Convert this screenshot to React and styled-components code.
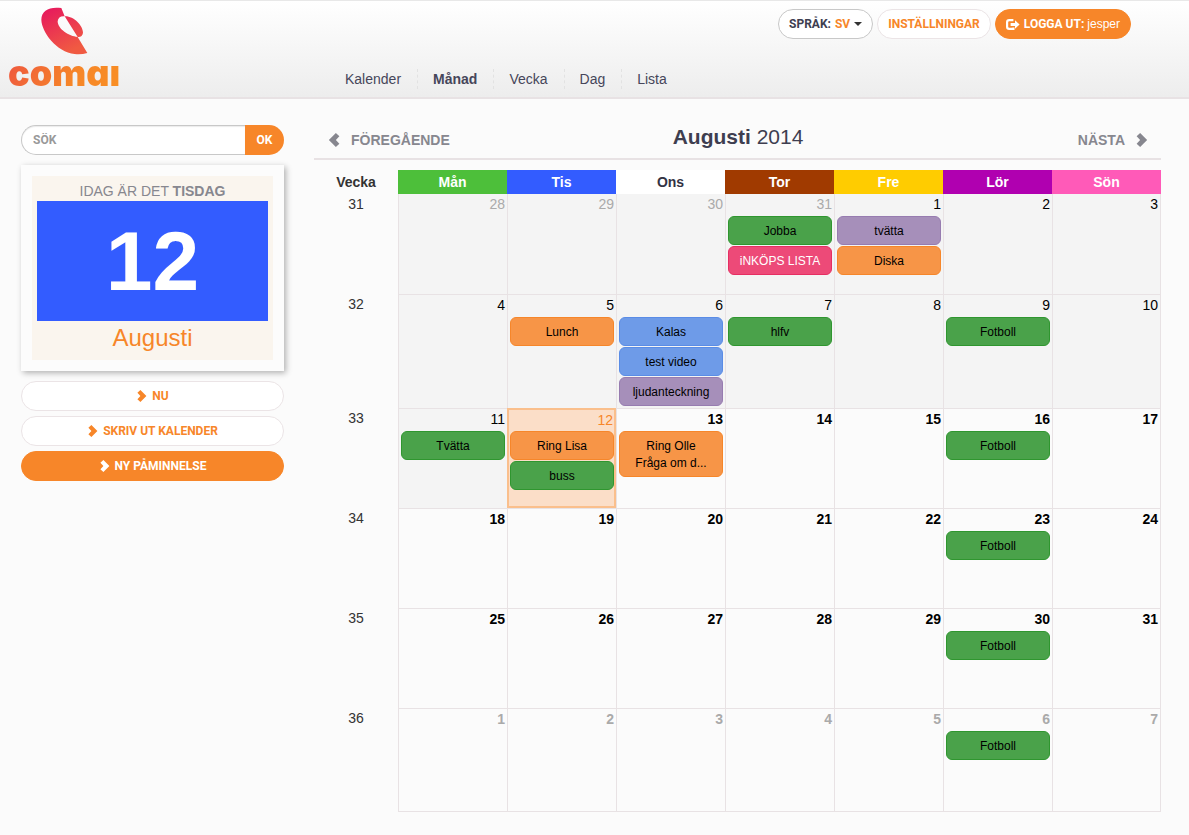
import React, { useState } from "react";
import styled, { createGlobalStyle } from "styled-components";

const weekdays = [
    { name: "Mån", color: "#4dbf3a" },
    { name: "Tis", color: "#335cff" },
    { name: "Ons", color: "#ffffff", text: "#333344" },
    { name: "Tor", color: "#a03a00" },
    { name: "Fre", color: "#ffcc00" },
    { name: "Lör", color: "#b000b0" },
    { name: "Sön", color: "#ff5ab8" },
];

const tones = {
    green: { fill: "#4aa24a", line: "#2f962f" },
    pink: { fill: "#ed4a78", line: "#e62e62" },
    purple: { fill: "#a68fba", line: "#977cb0" },
    orange: { fill: "#f79547", line: "#f6862a" },
    blue: { fill: "#6e9be8", line: "#5a8ce6" },
};

const fotboll = { tone: "green", lines: ["Fotboll"] };

const weeks = [
    {
        week: 31,
        days: [
            { date: 28, kind: "past", out: true },
            { date: 29, kind: "past", out: true },
            { date: 30, kind: "past", out: true },
            {
                date: 31,
                kind: "past",
                out: true,
                events: [
                    { tone: "green", lines: ["Jobba"] },
                    { tone: "pink", lines: ["iNKÖPS LISTA"] },
                ],
            },
            {
                date: 1,
                kind: "past",
                events: [
                    { tone: "purple", lines: ["tvätta"] },
                    { tone: "orange", lines: ["Diska"] },
                ],
            },
            { date: 2, kind: "past" },
            { date: 3, kind: "past" },
        ],
    },
    {
        week: 32,
        days: [
            { date: 4, kind: "past" },
            { date: 5, kind: "past", events: [{ tone: "orange", lines: ["Lunch"] }] },
            {
                date: 6,
                kind: "past",
                events: [
                    { tone: "blue", lines: ["Kalas"] },
                    { tone: "blue", lines: ["test video"] },
                    { tone: "purple", lines: ["ljudanteckning"] },
                ],
            },
            { date: 7, kind: "past", events: [{ tone: "green", lines: ["hlfv"] }] },
            { date: 8, kind: "past" },
            { date: 9, kind: "past", events: [fotboll] },
            { date: 10, kind: "past" },
        ],
    },
    {
        week: 33,
        days: [
            { date: 11, kind: "past", events: [{ tone: "green", lines: ["Tvätta"] }] },
            {
                date: 12,
                kind: "today",
                events: [
                    { tone: "orange", lines: ["Ring Lisa"] },
                    { tone: "green", lines: ["buss"] },
                ],
            },
            { date: 13, events: [{ tone: "orange", lines: ["Ring Olle", "Fråga om d..."] }] },
            { date: 14 },
            { date: 15 },
            { date: 16, events: [fotboll] },
            { date: 17 },
        ],
    },
    {
        week: 34,
        days: [18, 19, 20, 21, 22, 23, 24].map((date) => ({
            date,
            events: date === 23 ? [fotboll] : [],
        })),
    },
    {
        week: 35,
        days: [25, 26, 27, 28, 29, 30, 31].map((date) => ({
            date,
            events: date === 30 ? [fotboll] : [],
        })),
    },
    {
        week: 36,
        days: [1, 2, 3, 4, 5, 6, 7].map((date) => ({
            date,
            out: true,
            events: date === 6 ? [fotboll] : [],
        })),
    },
];

const Chevron = ({ left, size = 12 }) => (
    <svg width={size} height={size} viewBox="0 0 12 12" aria-hidden="true">
        <path
            d={
                left
                    ? "M7.6 0 L10.6 2.8 L7.6 6 L10.6 9.2 L7.6 12 L1.6 6 Z"
                    : "M4.4 0 L1.4 2.8 L4.4 6 L1.4 9.2 L4.4 12 L10.4 6 Z"
            }
            fill="currentColor"
        />
    </svg>
);

const LogoutIcon = () => (
    <svg width="14" height="11" viewBox="0 0 14 11" aria-hidden="true">
        <path
            d="M7.4 1.1 H3.2 Q1.1 1.1 1.1 3.2 V7.8 Q1.1 9.9 3.2 9.9 H7.4 V8.4"
            fill="none"
            stroke="currentColor"
            strokeWidth="2.2"
        />
        <path d="M4.6 4 H9 V1.2 L13.6 5.5 L9 9.8 V7 H4.6 Z" fill="currentColor" />
    </svg>
);

const LogoMark = () => (
    <svg width="48" height="48" viewBox="124 20 144 144" aria-hidden="true">
        <defs>
            <linearGradient id="mark" x1="0" y1="0" x2="0.5" y2="1">
                <stop offset="0" stopColor="#e6155f" />
                <stop offset="1" stopColor="#f05a42" />
            </linearGradient>
        </defs>
        <path
            d="M185 23 C150 18 125 30 125 58 C126 95 170 155 225 161 Q245 163 263 158 L234 110 C208 108 174 86 174 63 C175 52 184 46 195 48 Z M195 48 C220 46 250 75 250 97 C249 106 243 111 234 110 Z"
            fill="url(#mark)"
        />
    </svg>
);

export default function App() {
    const [query, setQuery] = useState("");

    return (
        <>
            <GlobalStyle />
            <Header>
                <Brand href="#start" aria-label="comai">
                    <LogoMark />
                    <Wordmark>comaı</Wordmark>
                </Brand>
                <HeaderBody>
                    <Tools>
                        <PillButton $tone="dark">
                            SPRÅK: <em>SV</em>
                            <Caret />
                        </PillButton>
                        <PillButton>INSTÄLLNINGAR</PillButton>
                        <PillButton $tone="solid">
                            <LogoutIcon />
                            <span>
                                LOGGA UT: <Username>jesper</Username>
                            </span>
                        </PillButton>
                    </Tools>
                    <Nav>
                        <NavLink href="#kalender">Kalender</NavLink>
                        <NavLink href="#manad" $active>
                            Månad
                        </NavLink>
                        <NavLink href="#vecka">Vecka</NavLink>
                        <NavLink href="#dag">Dag</NavLink>
                        <NavLink href="#lista">Lista</NavLink>
                    </Nav>
                </HeaderBody>
            </Header>
            <Page>
                <Sidebar>
                    <Search onSubmit={(e) => e.preventDefault()}>
                        <input
                            type="text"
                            aria-label="Sök"
                            placeholder="SÖK"
                            value={query}
                            onChange={(e) => setQuery(e.target.value)}
                        />
                        <button type="submit">OK</button>
                    </Search>
                    <TodayCard>
                        <TodayPaper>
                            <p>
                                IDAG ÄR DET <strong>TISDAG</strong>
                            </p>
                            <TodayDate>12</TodayDate>
                            <TodayMonth>Augusti</TodayMonth>
                        </TodayPaper>
                    </TodayCard>
                    <Actions>
                        <PillButton>
                            <Chevron />
                            NU
                        </PillButton>
                        <PillButton>
                            <Chevron />
                            SKRIV UT KALENDER
                        </PillButton>
                        <PillButton $tone="solid">
                            <Chevron />
                            NY PÅMINNELSE
                        </PillButton>
                    </Actions>
                </Sidebar>
                <main>
                    <MonthBar>
                        <StepLink href="#foregaende">
                            <Chevron left size={14} />
                            FÖREGÅENDE
                        </StepLink>
                        <h1>
                            Augusti <span>2014</span>
                        </h1>
                        <StepLink href="#nasta" $end>
                            NÄSTA
                            <Chevron size={14} />
                        </StepLink>
                    </MonthBar>
                    <Calendar>
                        <thead>
                            <tr>
                                <WeekHead scope="col">Vecka</WeekHead>
                                {weekdays.map((day) => (
                                    <DayHead
                                        key={day.name}
                                        scope="col"
                                        $color={day.color}
                                        $text={day.text}
                                    >
                                        {day.name}
                                    </DayHead>
                                ))}
                            </tr>
                        </thead>
                        <tbody>
                            {weeks.map(({ week, days }) => (
                                <WeekRow key={week}>
                                    <WeekNumber scope="row">{week}</WeekNumber>
                                    {days.map((day) => (
                                        <Day key={day.date} $kind={day.kind}>
                                            <DateLabel $kind={day.kind} $out={day.out}>
                                                {day.date}
                                            </DateLabel>
                                            {(day.events || []).map((event) => (
                                                <Event key={event.lines[0]} $tone={event.tone}>
                                                    {event.lines.map((line) => (
                                                        <div key={line}>{line}</div>
                                                    ))}
                                                </Event>
                                            ))}
                                        </Day>
                                    ))}
                                </WeekRow>
                            ))}
                        </tbody>
                    </Calendar>
                </main>
            </Page>
        </>
    );
}

const GlobalStyle = createGlobalStyle`
    * {
        box-sizing: border-box;
    }
    body {
        margin: 0;
        background-color: #fbfbfb;
        color: #333333;
        font-family: "Liberation Sans", Arial, sans-serif;
        font-size: 14px;
    }
    h1, p {
        margin: 0;
    }
    button, input {
        font-family: Roboto, "Liberation Sans", sans-serif;
        font-size: 12px;
        font-weight: bold;
    }
`;

const Header = styled.header`
    display: flex;
    height: 99px;
    border-top: 1px solid #e8e8e8;
    border-bottom: 2px solid #e8e2e4;
    background: linear-gradient(#ffffff, #ededed);
`;

const Brand = styled.a`
    display: flex;
    flex: 0 0 330px;
    flex-direction: column;
    align-items: flex-start;
    padding: 6px 0 0 8px;
    text-decoration: none;
    svg {
        margin-left: 33px;
    }
`;

const Wordmark = styled.span`
    font-family: Inter, "Liberation Sans", sans-serif;
    font-size: 36px;
    font-weight: 900;
    line-height: 36px;
    font-feature-settings: "cv11";
    color: transparent;
    background: linear-gradient(120deg, #ee5540, #f68628 60%, #f98f24);
    background-clip: text;
    -webkit-background-clip: text;
`;

const HeaderBody = styled.div`
    display: flex;
    flex: 1;
    flex-direction: column;
    justify-content: space-between;
    padding: 8px 58px 8px 0;
`;

const Tools = styled.div`
    display: flex;
    justify-content: flex-end;
    gap: 4px;
`;

const pillColors = {
    plain: "color: #f78629; border-color: #ebe4e6; background-color: #ffffff;",
    dark: "color: #3e3e50; border-color: #c8c8c8; background-color: #ffffff;",
    solid: "color: #ffffff; border-color: #f78629; background-color: #f78629;",
};

const PillButton = styled.button`
    display: flex;
    align-items: center;
    justify-content: center;
    gap: 4px;
    height: 30px;
    padding: 0 10px;
    border: 1px solid;
    border-radius: 15px;
    cursor: pointer;
    ${({ $tone = "plain" }) => pillColors[$tone]}
    em {
        font-style: normal;
        color: #f78629;
    }
`;

const Username = styled.span`
    font-family: "Liberation Sans", Arial, sans-serif;
    font-weight: normal;
`;

const Caret = styled.span`
    border: 4px solid transparent;
    border-top-color: #333333;
    border-bottom: 0;
`;

const Nav = styled.nav`
    display: flex;
`;

const NavLink = styled.a`
    padding: 0 16px 0 15px;
    color: #46465a;
    font-weight: ${({ $active }) => ($active ? "bold" : "normal")};
    line-height: 20px;
    text-decoration: none;
    & + & {
        border-left: 1px dashed #e2e2e2;
    }
`;

const Page = styled.div`
    display: grid;
    grid-template-columns: 263px 1fr;
    gap: 30px;
    padding: 26px 28px 24px 21px;
`;

const Sidebar = styled.aside`
    display: flex;
    flex-direction: column;
    gap: 10px;
`;

const Search = styled.form`
    display: flex;
    height: 30px;
    input {
        flex: 1;
        min-width: 0;
        padding: 0 11px;
        border: 1px solid #c8c8c8;
        border-right: 0;
        border-radius: 15px 0 0 15px;
        background-color: #ffffff;
        box-shadow: inset 0 1px 1px rgba(0, 0, 0, 0.08);
        outline: none;
        &::placeholder {
            color: #999999;
        }
    }
    button {
        width: 39px;
        padding: 0;
        border: 0;
        border-radius: 0 15px 15px 0;
        background-color: #f78629;
        color: #ffffff;
        cursor: pointer;
    }
`;

const TodayCard = styled.section`
    padding: 11px;
    background-color: #fcfcfc;
    box-shadow: 2px 2px 6px rgba(0, 0, 0, 0.3);
`;

const TodayPaper = styled.div`
    padding: 5px;
    background-color: #faf5ee;
    color: #87878f;
    line-height: 20px;
    text-align: center;
`;

const TodayDate = styled.div`
    background-color: #335cff;
    color: #ffffff;
    font-size: 84px;
    font-weight: bold;
    line-height: 120px;
`;

const TodayMonth = styled.div`
    color: #f78629;
    font-size: 24px;
    line-height: 34px;
`;

const Actions = styled.div`
    display: flex;
    flex-direction: column;
    gap: 5px;
`;

const MonthBar = styled.div`
    display: grid;
    grid-template-columns: 1fr auto 1fr;
    align-items: center;
    height: 35px;
    padding: 0 12px 10px 13px;
    border-bottom: 2px solid #e8e2e4;
    h1 {
        color: #3e3e50;
        font-size: 21px;
        line-height: 24px;
    }
    h1 span {
        font-weight: normal;
    }
`;

const StepLink = styled.a`
    display: flex;
    align-items: center;
    justify-content: ${({ $end }) => ($end ? "flex-end" : "flex-start")};
    gap: 10px;
    padding-top: 6px;
    color: #87878f;
    font-weight: bold;
    text-decoration: none;
`;

const Calendar = styled.table`
    width: 100%;
    margin-top: 10px;
    border-collapse: separate;
    border-spacing: 0;
    table-layout: fixed;
`;

const WeekHead = styled.th`
    width: 84px;
    padding: 0;
`;

const DayHead = styled.th`
    height: 24px;
    padding: 0;
    background-color: ${({ $color }) => $color};
    color: ${({ $text = "#ffffff" }) => $text};
`;

const WeekNumber = styled.th`
    padding: 0;
    font-weight: normal;
    line-height: 20px;
    vertical-align: top;
`;

const dayLook = {
    past: "background-color: #f4f4f4;",
    today: "background-color: #fbdec8;",
};

const Day = styled.td`
    padding: 0 2px 1px;
    border-top: 1px solid #e8e2e4;
    border-left: 1px solid #e8e2e4;
    vertical-align: top;
    ${({ $kind }) => dayLook[$kind]}
    &:last-child {
        border-right: 1px solid #e8e2e4;
    }
    ${({ $kind }) =>
        $kind === "today" &&
        `
        padding: 0 0 0 1px;
        border: 2px solid #fabf8c;
    `}
`;

const WeekRow = styled.tr`
    height: 100px;
    &:first-child ${Day} {
        border-top: 0;
    }
    &:last-child {
        height: 104px;
    }
    &:last-child ${Day} {
        border-bottom: 1px solid #e8e2e4;
    }
`;

const dateColor = ({ $kind, $out }) => {
    if ($kind === "today") return "#f78629";
    return $out ? "#aaaaaa" : "#000000";
};

const DateLabel = styled.div`
    height: ${({ $kind }) => ($kind === "today" ? 21 : 22)}px;
    padding-right: ${({ $kind }) => ($kind === "today" ? 1 : 0)}px;
    color: ${dateColor};
    font-weight: ${({ $kind }) => ($kind ? "normal" : "bold")};
    line-height: 20px;
    text-align: right;
`;

const Event = styled.div`
    margin-bottom: 1px;
    padding: 6px 5px 4px;
    border: 1px solid ${({ $tone }) => tones[$tone].line};
    border-radius: 6px;
    background-color: ${({ $tone }) => tones[$tone].fill};
    color: ${({ $tone }) => ($tone === "pink" ? "#ffffff" : "#000000")};
    font-size: 12px;
    line-height: 17px;
    text-align: center;
    white-space: nowrap;
`;
